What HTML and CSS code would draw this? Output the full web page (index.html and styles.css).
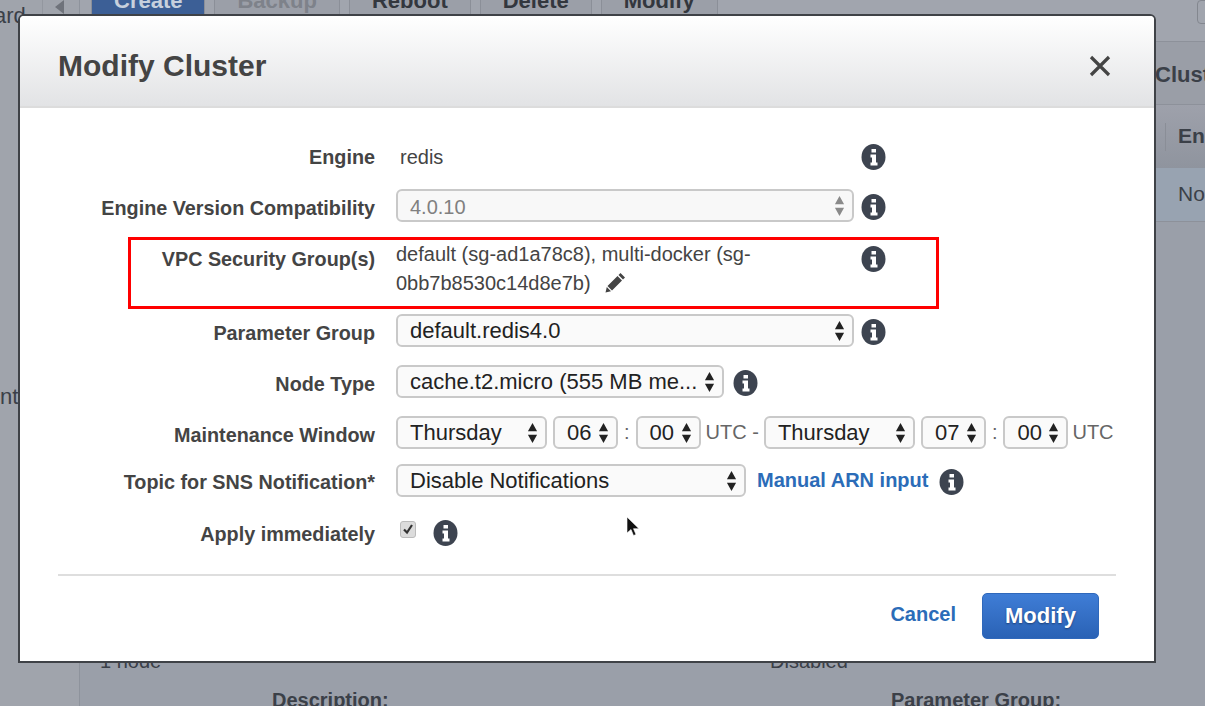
FILE: index.html
```html
<!DOCTYPE html>
<html lang="en">
<head>
  <meta charset="UTF-8" />
  <meta name="viewport" content="width=device-width, initial-scale=1.0"/>
  <title>Modify Cluster</title>
  <link rel="stylesheet" href="styles.css">
</head>
<body>
  <svg class="defs" width="0" height="0">
    <symbol id="info" viewBox="0 0 24 26">
      <ellipse cx="12" cy="13" rx="12" ry="13" fill="#3d4450"/>
      <path fill="#fff" d="M10 5h4.500v3.500H10zM9 10.500h5.500v8H16v3H9v-3h1.500v-5H9z"/>
    </symbol>
    <symbol id="arrows" viewBox="0 0 12 24">
      <path d="M6 1l5 9H1zM1 14h10l-5 9z"/>
    </symbol>
  </svg>

  <div class="page">
    <div class="sidebar">
      <div class="side-top">
        <span class="side-word">ard</span>
        <span class="tool-arrow"></span>
      </div>
      <div class="side-mid">nt</div>
    </div>
    <div class="main">
      <div class="toolbar">
        <span class="tool-btn tool-create">Create</span>
        <span class="tool-btn tool-off">Backup</span>
        <span class="tool-btn">Reboot</span>
        <span class="tool-btn">Delete</span>
        <span class="tool-btn">Modify</span>
        <span class="tool-box"></span>
      </div>
      <div class="band band-title">Clust</div>
      <div class="band band-head">Eng</div>
      <div class="band band-row">No</div>
      <div class="details">
        <span class="d-node">1 node</span>
        <span class="d-disabled">Disabled</span>
        <b class="d-desc">Description:</b>
        <b class="d-param">Parameter Group:</b>
      </div>
    </div>
  </div>

  <div class="modal">
    <div class="modal-head">
      <h2>Modify Cluster</h2>
      <svg class="close" width="22" height="22" viewBox="0 0 22 22"><path d="M2 2l18 18M20 2L2 20" stroke="#444" stroke-width="3.200" fill="none"/></svg>
    </div>

    <div class="form">
      <div class="row row-engine">
        <label>Engine</label>
        <div class="field-wide"><span class="plain">redis</span></div>
        <svg class="info"><use href="#info"/></svg>
      </div>
      <div class="row row-version">
        <label>Engine Version Compatibility</label>
        <div class="select field-wide disabled"><span>4.0.10</span><svg class="arr"><use href="#arrows"/></svg></div>
        <svg class="info"><use href="#info"/></svg>
      </div>
      <div class="row row-vpc">
        <label>VPC Security Group(s)</label>
        <div class="field-wide vpc-text">default (sg-ad1a78c8), multi-docker (sg-<br>0bb7b8530c14d8e7b)
          <svg class="pencil" width="22" height="22" viewBox="0 0 22 22"><path fill="#444" d="M16.500 1l4.500 4.500-2 2-4.500-4.500zM13.500 4l4.500 4.500L8 18.500l-4.500-4.500zM2.800 15l4.200 4.200-5.500 1.300z"/></svg>
        </div>
        <svg class="info"><use href="#info"/></svg>
      </div>
      <div class="row row-param">
        <label>Parameter Group</label>
        <div class="select field-wide"><span>default.redis4.0</span><svg class="arr"><use href="#arrows"/></svg></div>
        <svg class="info"><use href="#info"/></svg>
      </div>
      <div class="row row-node">
        <label>Node Type</label>
        <div class="select field-node"><span>cache.t2.micro (555 MB me...</span><svg class="arr"><use href="#arrows"/></svg></div>
        <svg class="info"><use href="#info"/></svg>
      </div>
      <div class="row row-maint">
        <label>Maintenance Window</label>
        <div class="select field-day"><span>Thursday</span><svg class="arr"><use href="#arrows"/></svg></div>
        <div class="select field-num"><span>06</span><svg class="arr"><use href="#arrows"/></svg></div>
        <span class="sep">:</span>
        <div class="select field-num"><span>00</span><svg class="arr"><use href="#arrows"/></svg></div>
        <span class="sep sep-dash">UTC -</span>
        <div class="select field-day"><span>Thursday</span><svg class="arr"><use href="#arrows"/></svg></div>
        <div class="select field-num"><span>07</span><svg class="arr"><use href="#arrows"/></svg></div>
        <span class="sep">:</span>
        <div class="select field-num"><span>00</span><svg class="arr"><use href="#arrows"/></svg></div>
        <span class="sep sep-end">UTC</span>
      </div>
      <div class="row row-topic">
        <label>Topic for SNS Notification*</label>
        <div class="select field-topic"><span>Disable Notifications</span><svg class="arr"><use href="#arrows"/></svg></div>
        <a class="link arn">Manual ARN input</a>
        <svg class="info"><use href="#info"/></svg>
      </div>
      <div class="row row-apply">
        <label>Apply immediately</label>
        <span class="check"><svg width="12" height="12" viewBox="0 0 12 12"><path d="M2 6.500l3 3L10 2" stroke="#333" stroke-width="2.200" fill="none"/></svg></span>
        <svg class="info"><use href="#info"/></svg>
      </div>
    </div>

    <div class="modal-foot">
      <a class="link cancel">Cancel</a>
      <button type="button">Modify</button>
    </div>
  </div>

  <div class="red-box"></div>
  <svg class="cursor" width="14" height="22" viewBox="0 0 14 22"><path d="M1 1v16l4-3.500 2.500 6 2.500-1-2.500-5.800H13z" fill="#111" stroke="#fff" stroke-width=".6"/></svg>
</body>
</html>
```

FILE: styles.css
```css
* {
  box-sizing: border-box;
}

html, body {
  margin: 0;
  height: 706px;
  overflow: hidden;
}

body {
  font-family: "Liberation Sans", Arial, sans-serif;
  background: #9aa0aa;
  color: #3b4048;
}

.defs {
  position: absolute;
}

/* page behind the modal */
.page {
  display: flex;
  height: 706px;
}

.sidebar {
  flex: none;
  width: 80px;
  border-right: 1px solid #8e939c;
  background: #a0a4ac;
  font-size: 22px;
  overflow: hidden;
}

.side-top {
  display: flex;
  height: 42px;
}

.side-word {
  width: 49px;
  margin-left: -6px;
  padding-left: 0;
  padding-top: 3px;
  border-right: 1px solid #93979f;
}

.tool-arrow {
  width: 0;
  height: 0;
  margin-left: 12px;
  border-top: 7px solid transparent;
  border-bottom: 7px solid transparent;
  border-right: 9px solid #6f737b;
}

.side-mid {
  margin-top: 342px;
}

.main {
  flex: 1;
  min-width: 0;
  background: #9a9fa9;
  overflow: hidden;
}

.toolbar {
  display: flex;
  gap: 9px;
  height: 42px;
  padding-left: 11px;
  background: #a1a5ae;
  border-bottom: 1px solid #8d919a;
}

.tool-btn {
  height: 16px;
  padding: 0 22px;
  background: #9b9fa8;
  border-right: 1px solid #8b8f98;
  border-left: 1px solid #8b8f98;
  font-size: 22px;
  font-weight: bold;
  line-height: 2px;
  color: #33373e;
}

.tool-create {
  background: #3c5f96;
  color: #c7d0dd;
}

.tool-off {
  color: #7e828a;
}

.tool-box {
  flex: none;
  width: 20px;
  height: 24px;
  margin-left: auto;
  margin-right: -12px;
  border: 1px solid #83878f;
  border-radius: 4px;
}

.band {
  padding-left: 1098px;
  white-space: nowrap;
}

.band-title {
  height: 63px;
  padding-left: 1075px;
  font-size: 22px;
  font-weight: bold;
  line-height: 66px;
  background: #9a9ea7;
  border-bottom: 1px solid #8d919a;
}

.band-head {
  height: 63px;
  padding-left: 1085px;
  background: linear-gradient(#9ea1ab, #8f949e);
  font-size: 21px;
  font-weight: bold;
  line-height: 62px;
}

.band-head::before {
  content: "";
  display: inline-block;
  width: 1px;
  height: 28px;
  margin-right: 12px;
  vertical-align: middle;
  background: #8a8e97;
}

.band-row {
  height: 54px;
  background: #98a3b1;
  font-size: 21px;
  line-height: 52px;
  border-bottom: 1px solid #8d919a;
}

.details {
  display: grid;
  grid-template-columns: 172px 498px 121px 1fr;
  grid-template-rows: 39px 30px;
  margin-top: 428px;
  padding-left: 20px;
  font-size: 20px;
  white-space: nowrap;
}

.d-desc {
  grid-column: 2;
  grid-row: 2;
}

.d-param {
  grid-column: 4;
  grid-row: 2;
}

.d-disabled {
  grid-column: 3;
}

/* modal */
.modal {
  position: absolute;
  left: 18px;
  top: 14px;
  width: 1138px;
  height: 649px;
  background: #fff;
  border: 2px solid #3f4247;
  border-radius: 6px 6px 0 0;
}

.modal-head {
  display: flex;
  align-items: center;
  justify-content: space-between;
  height: 92px;
  padding: 10px 43px 0 38px;
  background: linear-gradient(#fff, #e2e3e5);
  border-bottom: 2px solid #dcdcdc;
  border-radius: 4px 4px 0 0;
}

.modal-head h2 {
  margin: 0;
  font-size: 30px;
  color: #444;
}

.form {
  padding-top: 31px;
  font-size: 20px;
}

.row {
  display: flex;
  align-items: center;
  height: 33px;
  margin-bottom: 18px;
}

.row label {
  flex: none;
  width: 355px;
  margin-right: 21px;
  padding-top: 6px;
  text-align: right;
  font-size: 19.800px;
  font-weight: bold;
  color: #444;
}

.row-engine {
  margin-bottom: 17px;
}

.row-engine label {
  padding-top: 4px;
}

.row-engine .field-wide {
  padding-top: 3px;
}

.field-wide {
  flex: none;
  width: 458px;
}

.plain {
  padding-left: 4px;
  color: #444;
}

.select {
  display: flex;
  flex: none;
  align-items: center;
  justify-content: space-between;
  height: 33px;
  padding: 0 7px 0 12px;
  background: #fafafa;
  border: 2px solid #c9c9c9;
  border-radius: 6px;
  font-size: 22px;
  color: #222;
  white-space: nowrap;
}

.select span {
  padding-top: 1px;
}

.select.disabled {
  font-size: 20px;
  color: #808080;
  background: #f8f8f8;
}

.select.disabled span {
  padding-top: 3px;
}

.select.disabled .arr {
  fill: #8a8a8a;
}

.arr {
  flex: none;
  width: 11px;
  height: 22px;
  fill: #222;
}

.info {
  flex: none;
  width: 25px;
  height: 26px;
  margin: 3px 0 0 7px;
}

.row-vpc {
  align-items: flex-start;
  height: 58px;
  margin-bottom: 16px;
}

.vpc-text {
  font-size: 20px;
  line-height: 29px;
  color: #444;
}

.row-vpc label {
  padding-top: 8px;
}

.row-vpc .info {
  margin-top: 6px;
}

.pencil {
  margin-left: 8px;
  vertical-align: -4px;
}

.field-node {
  width: 328px;
}

.row-node .info {
  margin-left: 9px;
}

.field-day {
  width: 151px;
}

.field-num {
  width: 65px;
  margin-left: 6px;
}

.sep {
  margin: 0 6px;
  font-size: 20px;
  color: #666;
}

.row-maint .sep + .select {
  margin-left: 0;
}

.sep-dash {
  margin: 0 5px;
}

.sep-end {
  margin: 0 0 0 4px;
}

.field-topic {
  width: 350px;
}

.link {
  color: #2b6cb8;
  font-weight: bold;
}

.arn {
  margin-left: 11px;
  font-size: 20px;
}

.row-topic {
  margin-top: -3px;
}

.row-topic label {
  padding-top: 4px;
}

.row-topic .info {
  margin-left: 11px;
}

.check {
  display: flex;
  align-items: center;
  justify-content: center;
  width: 16px;
  height: 17px;
  margin: -5px 0 0 4px;
  background: #dcdcdc;
  border: 1px solid #bbb;
  border-radius: 3px;
}

.row-apply {
  margin-bottom: 26px;
}

.row-apply .info {
  margin-left: 17px;
}

.modal-foot {
  display: flex;
  align-items: center;
  justify-content: flex-end;
  gap: 26px;
  height: 66px;
  margin: 0 38px;
  padding: 16px 17px 0 0;
  border-top: 2px solid #dedede;
}

.cancel {
  margin-bottom: 4px;
  font-size: 20px;
}

.modal-foot button {
  width: 117px;
  height: 46px;
  background: linear-gradient(#3f7dd6, #2a62b5);
  border: 1px solid #2f68bb;
  border-radius: 5px;
  color: #fff;
  font: bold 22px "Liberation Sans", Arial, sans-serif;
  text-shadow: 0 1px 2px #1d3f75;
}

/* annotation + pointer drawn over the shot */
.red-box {
  position: absolute;
  left: 128px;
  top: 237px;
  width: 811px;
  height: 72px;
  border: 3px solid #f00;
}

.cursor {
  position: absolute;
  left: 626px;
  top: 516px;
}
```
